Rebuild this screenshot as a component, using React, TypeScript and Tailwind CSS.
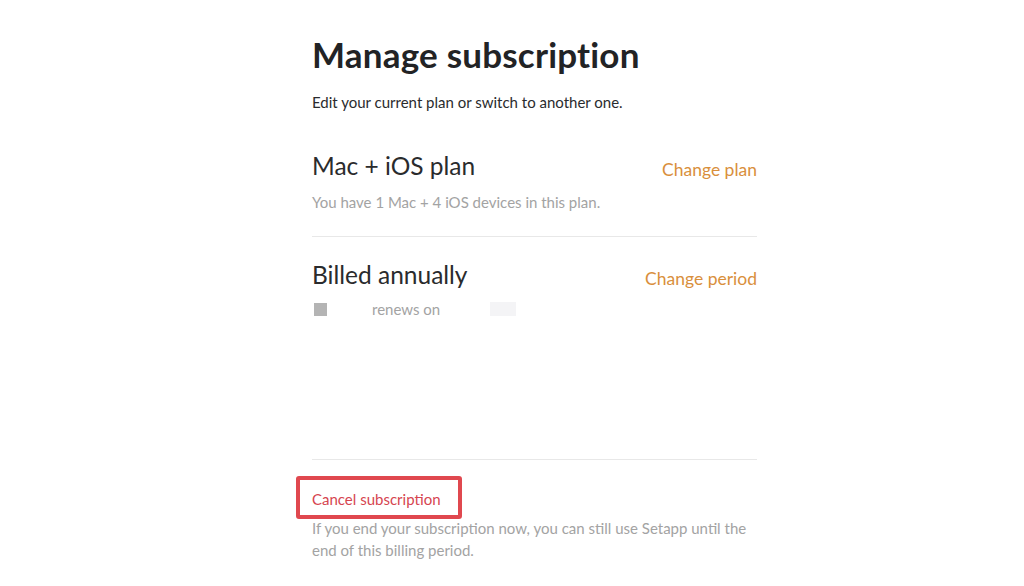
export default function App() {
  return (
    <div className="min-h-screen w-full bg-white" style={{ fontFamily: "Lato, 'Open Sans', sans-serif" }}>
      <div className="ml-[312px] w-[445px] pt-[32px]">
        {/* Header */}
        <h1 className="text-[35px] leading-[44px] font-bold text-[#222325] tracking-[0.2px]">
          Manage subscription
        </h1>
        <p className="mt-[16px] text-[15px] leading-[20px] text-[#2a2b2d]">
          Edit your current plan or switch to another one.
        </p>

        {/* Plan */}
        <div className="mt-[38px] pb-[24px] border-b border-[#e8e8e8]">
          <div className="flex items-end justify-between">
            <h2 className="text-[24.5px] leading-[32px] text-[#2a2b2d]">Mac + iOS plan</h2>
            <a className="text-[17.5px] leading-[24px] text-[#d98f3c]">Change plan</a>
          </div>
          <p className="mt-[10px] text-[15px] leading-[20px] text-[#a3a3a3]">
            You have 1 Mac + 4 iOS devices in this plan.
          </p>
        </div>

        {/* Billing */}
        <div className="mt-[22px] h-[201px] border-b border-[#e8e8e8]">
          <div className="flex items-end justify-between">
            <h2 className="text-[24.5px] leading-[32px] text-[#2a2b2d]">Billed annually</h2>
            <a className="text-[17.5px] leading-[24px] text-[#d98f3c]">Change period</a>
          </div>
          <div className="mt-[8px] flex items-center text-[15px] leading-[20px] text-[#a3a3a3]">
            <span className="ml-[2px] inline-block w-[13px] h-[13px] bg-[#b4b4b4]" />
            <span className="ml-[45px]">renews on</span>
            <span className="ml-[50px] inline-block w-[26px] h-[14px] bg-[#f4f4f6]" />
          </div>
        </div>

        {/* Cancel */}
        <div className="mt-[16px]">
          <a className="-ml-[16px] inline-block rounded-[3px] border-[4px] border-[#e0484f] pl-[12px] pr-[17px] pt-[10px] pb-[7px] text-[15px] leading-[18px] text-[#d64550]">
            Cancel subscription
          </a>
          <p className="-mt-[2px] text-[15px] leading-[22px] text-[#a3a3a3]">
            If you end your subscription now, you can still use Setapp until the end of this billing period.
          </p>
        </div>
      </div>
    </div>
  );
}
